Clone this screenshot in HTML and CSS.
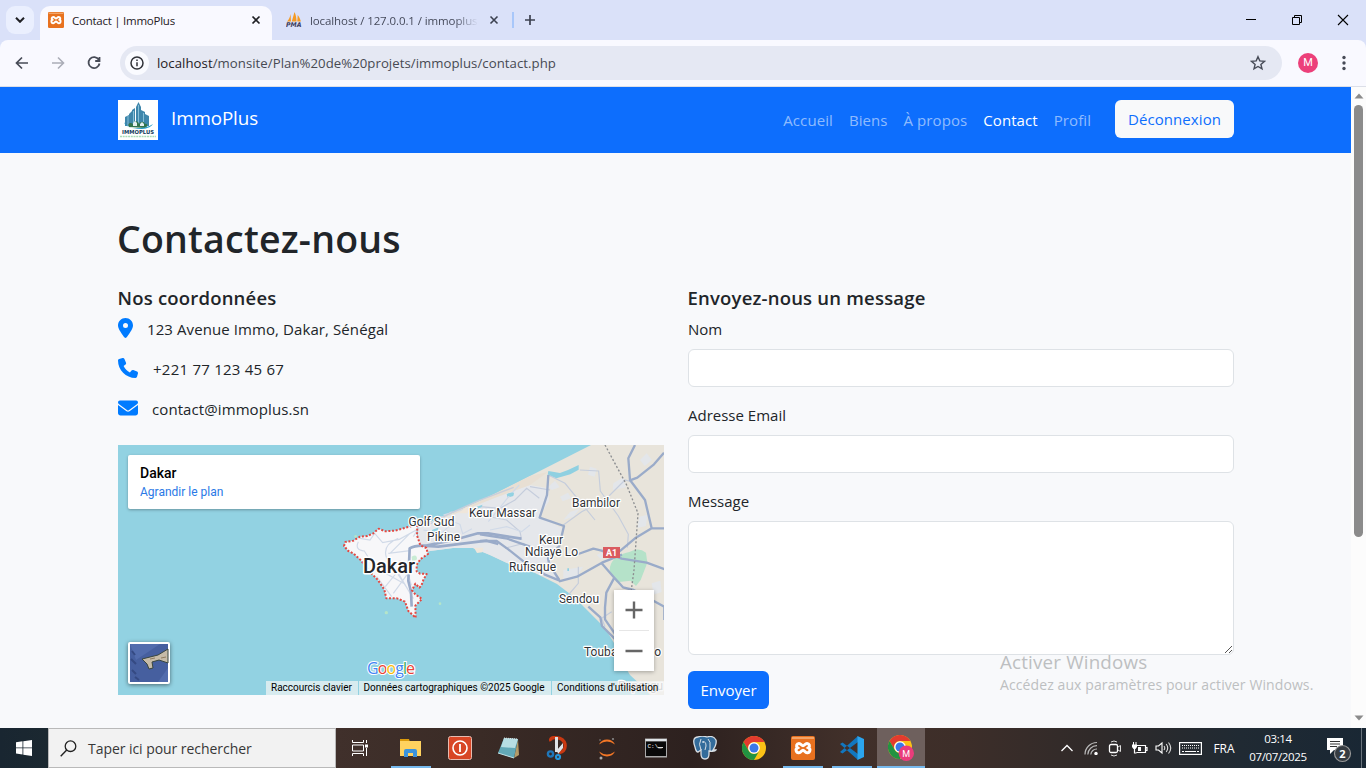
FILE: index.html
```html
<!DOCTYPE html>
<html lang="fr">
<head>
<meta charset="utf-8">
<title>Contact | ImmoPlus</title>
<link rel="stylesheet" href="styles.css">
</head>
<body>
<svg width="0" height="0" class="defs" aria-hidden="true">
  <symbol id="xampp" viewBox="0 0 24 24">
    <rect width="24" height="24" rx="2" fill="#e8711f"/><rect x="1" y="1" width="22" height="2" fill="#f2a468"/>
    <path d="M8 7.500a2.400 2.400 0 0 0-1.500 4.300A2.600 2.600 0 0 0 8 16.700c2 0 2.600-2.500 4-2.500s2 2.500 4 2.500a2.600 2.600 0 0 0 1.500-4.900A2.400 2.400 0 0 0 16 7.500c-2 0-2.600 2.300-4 2.300s-2-2.300-4-2.300z" fill="none" stroke="#fff" stroke-width="3"/>
  </symbol>
  <symbol id="chrome" viewBox="0 0 24 24">
    <circle cx="12" cy="12" r="12" fill="#fbc116"/>
    <path d="M1.600 6A12 12 0 0 1 22.400 6H12a6 6 0 0 0-5.200 9z" fill="#e33b2e"/>
    <path d="M1.600 6A12 12 0 0 0 12 24l5.200-9A6 6 0 0 1 6.800 15z" fill="#229342"/>
    <circle cx="12" cy="12" r="5.800" fill="#fff"/><circle cx="12" cy="12" r="4.500" fill="#3b78e7"/>
  </symbol>
</svg>

<header class="browser">
  <div class="tabstrip">
    <div class="tab-search"><svg width="10" height="6" viewBox="0 0 10 6"><path d="M1 .8l4 4 4-4" fill="none" stroke="#1f2024" stroke-width="2"/></svg></div>
    <div class="tab tab-active">
      <svg width="16" height="16"><use href="#xampp"/></svg>
      <span class="tab-title t-one">Contact | ImmoPlus</span>
      <svg class="close" width="10" height="10" viewBox="0 0 10 10"><path d="M1.500 1.500l7 7m0-7l-7 7" stroke="#1f2024" stroke-width="1.700"/></svg>
    </div>
    <div class="tab tab-other">
      <svg width="16" height="16" viewBox="0 0 16 16"><path d="M1 9.500c2-2 3-4.500 3.600-7.500l.4 7.500zM5.800 9.500L8.500 0c1.500 3 2 6.500 2 9.500zM11.300 9.500l.4-6.500c1.600 2 2.700 4.500 3.200 6.500z" fill="#f59a23"/><text x="0" y="15" class="pma" textLength="15.500" lengthAdjust="spacingAndGlyphs">PMA</text></svg>
      <span class="tab-title t-two">localhost / 127.0.0.1 / immoplus</span>
      <svg class="close" width="10" height="10" viewBox="0 0 10 10"><path d="M1.500 1.500l7 7m0-7l-7 7" stroke="#3c4150" stroke-width="1.600"/></svg>
    </div>
    <i class="tab-sep"></i>
    <svg class="newtab" width="12" height="12" viewBox="0 0 12 12"><path d="M6 1v10M1 6h10" stroke="#3c4150" stroke-width="1.700"/></svg>
    <div class="winctl">
      <svg width="46" height="40" viewBox="0 0 46 40"><path d="M18 19.500h10" stroke="#000"/></svg>
      <svg width="46" height="40" viewBox="0 0 46 40"><path d="M18.500 17.500h7v7h-7zM20.500 17.500v-2h7v7h-2" fill="none" stroke="#000"/></svg>
      <svg width="46" height="40" viewBox="0 0 46 40"><path d="M18 15l10 10m0-10L18 25" stroke="#000" stroke-width="1.100"/></svg>
    </div>
  </div>
  <div class="toolbar">
    <svg class="nav-ico" width="16" height="16" viewBox="0 0 16 16"><path d="M14 8H3M8 2.500L2.500 8 8 13.500" fill="none" stroke="#474b57" stroke-width="1.700"/></svg>
    <svg class="nav-ico" width="16" height="16" viewBox="0 0 16 16"><path d="M2 8h11M8 2.500L13.500 8 8 13.500" fill="none" stroke="#abadb8" stroke-width="1.600"/></svg>
    <svg class="nav-ico" width="16" height="16" viewBox="0 0 16 16"><path d="M12.800 4.800A5.500 5.500 0 1 0 13.500 8.500M13.500 2v4h-4.300" fill="none" stroke="#474b57" stroke-width="1.800"/></svg>
    <div class="omnibox">
      <span class="info"><svg width="14" height="14" viewBox="0 0 14 14"><circle cx="7" cy="7" r="6" fill="none" stroke="#303238" stroke-width="1.500"/><path d="M7 6.200v4M7 3.500v1.500" stroke="#303238" stroke-width="1.500"/></svg></span>
      <span class="url"><b>localhost</b>/monsite/Plan%20de%20projets/immoplus/contact.php</span>
      <svg class="star" width="16" height="16" viewBox="0 0 16 16"><path d="M8 1.700l1.800 4.200 4.700.4-3.600 3.100 1.100 4.500L8 11.500l-4 2.400 1.100-4.500L1.500 6.300l4.700-.4z" fill="none" stroke="#474b57" stroke-width="1.400"/></svg>
    </div>
    <span class="avatar">M</span>
    <svg class="menu" width="4" height="16" viewBox="0 0 4 16"><g fill="#474b57"><circle cx="2" cy="2.500" r="1.700"/><circle cx="2" cy="8" r="1.700"/><circle cx="2" cy="13.500" r="1.700"/></g></svg>
  </div>
</header>

<div class="viewport">
  <div class="page">
    <nav class="navbar">
      <svg class="logo" width="40" height="40" viewBox="0 0 40 40">
        <rect width="40" height="40" fill="#fff"/>
        <path d="M7 26V17l4-2v-1l3-3v15zM14 26V10l3-2v18zM18 26V7l2.500-5L23 7v19zM23 26V10l4 2v14zM27 26V14l4 2v10z" fill="#3f86ab"/>
        <path d="M10 26V16m5.500 10V11m5 15V5m5 21V13" stroke="#8cc5dc" stroke-width=".9"/>
        <path d="M11 27c-2-4 2-5 4-3 2-4 5-3 6 0 2-3 5-3 6 0 3-1 3 3 0 4z" fill="#33744d"/>
        <path d="M15 26v-3l2-2 2 2v3zM22 26v-2l2-2 2 2v2z" fill="#e4eef0"/>
        <path d="M6 22c1 7 19 9 29 2-5 8-26 6-29-2z" fill="#259bc8"/>
        <text x="4" y="34" class="logo-name" textLength="32" lengthAdjust="spacingAndGlyphs">IMMOPLUS</text>
        <path d="M2 36.500h36" stroke="#a9dcb8" stroke-width="1.300" stroke-dasharray="2 .7"/>
      </svg>
      <span class="brand">ImmoPlus</span>
      <div class="links">
        <a>Accueil</a><a>Biens</a><a>À propos</a><a class="current">Contact</a><a>Profil</a>
      </div>
      <a class="logout">Déconnexion</a>
    </nav>
    <main class="content">
      <h1>Contactez-nous</h1>
      <div class="columns">
        <section>
          <h2>Nos coordonnées</h2>
          <ul class="contact">
            <li class="c1"><svg width="15" height="20" viewBox="0 0 384 512"><path d="M215.700 499.200C267 435 384 279.400 384 192C384 86 298 0 192 0S0 86 0 192c0 87.400 117 243 168.300 307.200c12.300 15.300 35.100 15.300 47.400 0zM192 128a64 64 0 1 1 0 128 64 64 0 1 1 0-128z"/></svg><span>123 Avenue Immo, Dakar, Sénégal</span></li>
            <li class="c2"><svg width="20" height="20" viewBox="0 0 512 512"><path d="M164.900 24.600c-7.700-18.600-28-28.500-47.400-23.200l-88 24C12.100 30.200 0 46 0 64C0 311.400 200.600 512 448 512c18 0 33.800-12.100 38.600-29.500l24-88c5.300-19.400-4.600-39.700-23.200-47.400l-96-40c-16.300-6.800-35.200-2.100-46.300 11.600L304.700 368C234.300 334.700 177.300 277.700 144 207.300L193.300 167c13.700-11.200 18.400-30 11.600-46.300l-40-96z"/></svg><span>+221 77 123 45 67</span></li>
            <li class="c3"><svg width="20" height="20" viewBox="0 0 512 512"><path d="M48 64C21.500 64 0 85.500 0 112c0 15.100 7.100 29.300 19.200 38.400L236.800 313.600c11.400 8.500 27 8.500 38.400 0L492.800 150.400c12.100-9.100 19.200-23.300 19.200-38.400c0-26.500-21.500-48-48-48H48zM0 176V384c0 35.300 28.700 64 64 64H448c35.300 0 64-28.700 64-64V176L294.400 339.200c-22.800 17.100-54 17.100-76.800 0L0 176z"/></svg><span>contact@immoplus.sn</span></li>
          </ul>
          <div class="map">
            <svg width="546" height="250" viewBox="0 0 546 250">
              <rect width="546" height="250" fill="#92d2e2"/>
              <path d="M473 0L412 31 379 48 337 67 300 82 300 110 312 106 335 103 355 103 372 110 389 118 415 127 439 139 456 152 472 168 487 183 496 198 503 215 512 230 526 243 532 250H546V0z" fill="#e8e4db"/>
              <path d="M300 82L337 69 379 52 412 40 430 43 431 56 421 72 444 83 441 97 431 110 441 137 415 127 389 118 372 110 355 103 335 103 312 106 300 110z" fill="#e5e7eb"/>
              <path d="M320 75L362 56 412 31 430 27 412 40 379 52z" fill="#e8dfd3"/>
              <g transform="translate(362 -5) scale(.33333)">
                <g fill="#e3e6ea"><path d="M205 140l20-18 14 20-24 8zM400 130l30-18 8 30-40 8zM250 390l60-10-20 30-40 6zM480 60l20-20 16 20-22 18zM330 80l20 6-6 24-20-6zM250 240l20-24 30-10-20 24zM478 230l24-6-4 34-26 6zM515 430l26-8 4 34-24 8zM350 345l38-20 10 16-34 18zM240 170l24-12 10 16-26 10z"/></g>
                <path d="M205 93l35 6 24-9 32-15v14l-25 14-42 12-26-10zM82 166q10-10 20-6l-2 8-18 5z" fill="#8fd0e1"/>
                <path d="M448 336q28-16 50 2l4 30-20 52-14 18-16-16-42 5q-26-30-20-46 8-35 58-45z" fill="#b5e2c9"/>
                <path d="M0 200l60 5 45-25 35-35 38 30M0 225l80 15 40 35 5 25M75 325l55-15 30 25M250 255l55-40 70-35 60-60 16 4M300 90l56 3 5 60 54 75 30 55-3 40M205 105l50 25 90 110M295 380v50l-30 35M375 560l-10-25 30-20M210 150l-60-10" fill="none" stroke="#c5cddc" stroke-width="3.500"/>
                <path d="M465 15l-20 40 5 65 45 60 20 85-50 30-50 42-22 8M552 38l-30 35-50 40-22 8M205 105l-4 60-22 68 73 25-14 60-34 36 4 20 30 46M515 265h40M237 424l54-14 75-42 60-24M295 342l45-16 25 6 60 24 75 12 55 20M365 370l38 43 26 29 32 8 92 50v40M403 413l-24 45-4 45 0 35 33 48 10 18" fill="none" stroke="#9aabc9" stroke-width="7" stroke-linejoin="round"/>
                <path d="M0 283l82 13 68 24M0 303h50l35 25 50 40 58 35 46 19M325 500l36 32 5 26 40 40" fill="none" stroke="#9aabc9" stroke-width="7" stroke-linejoin="round"/>
                <path d="M375 15l65 120 34 85-12 170-8 60" fill="none" stroke="#8c8e91" stroke-width="4" stroke-dasharray="6 6"/>
                <path d="M262 385h5v8h-5z" fill="#8fd0e1"/>
              </g>
              <g transform="translate(212 -5) scale(.33333)">
                <path d="M42 318l4-12 24-4 20-12 22-2 18-8 16-14 20 8 28-2 20-5 20-6 24-7 4 4-1 28 10 30 18 8 5 18-22 15-12 17 0 20 10 7 20 1-10 18-6 17-6 6-12-12-10 20 10 12 20 14-20 20 1 36-22-20-10-28-24-10-32 0-6-26-20-30-24-24-26-34-22-20-16-8z" fill="#f7f7f9"/>
                <g fill="none" stroke="#d1dae8" stroke-width="3.500"><path d="M85 305q-12 25 18 28l30 48 90 50M90 295l30 5 14-20 24 28 50-10 55-30M205 295q-50 20-35 60 10 25 70 12M175 340l65-8M175 360l60 90M160 398l70-12 14 50M180 340l30-30 30-30M166 440l60-74M190 460l44-60M205 400l45 76M210 362l10 36M138 395l52-12M140 410l45 60M250 290l30-50 60-10 25-15M280 270l55 10 35-35 20 8 8 28 28-15M340 225l50-15 30 0M475 245l25-30 40-50 28-30M480 270l50-10 45 15 25-20M310 285l45-12"/></g>
                <path d="M300 252l60-32 86-38 105-40M260 258l35-30" fill="none" stroke="#c8cedb" stroke-width="4"/>
                <path d="M530 163q14-8 22-5-4 12-20 10zM440 200l18-6-4 8-12 4zM306 270l20-8-4 12-16 2z" fill="#92d2e2"/>
                <path d="M245 350q16-10 16 8l-14 10z" fill="#c9ecd4"/>
                <path d="M432 323l28 0-3 14-16 2zM410 200l30 0-30 20-25 0z" fill="#efe6db"/>
                <path d="M245 500l-2-45-8-32 4-98q15-10 50-8l85-18 70-19 30 0 100 16M290 318l35 2 145-18 35 10" fill="none" stroke="#9aabc9" stroke-width="8" stroke-linejoin="round"/>
                <path d="M42 318l4-12 24-4 20-12 22-2 18-8 16-14 20 8 28-2 20-5 20-6 24-7 4 4-1 28 10 30 18 8 5 18-22 15-12 17 0 20 10 7 20 1-10 18-6 17-6 6-12-12-10 20 10 12 20 14-20 20 1 36-22-20-10-28-24-10-32 0-6-26-20-30-24-24-26-34-22-20-16-8z" fill="none" stroke="#e34842" stroke-width="6" stroke-dasharray="6 5" stroke-linejoin="round"/>
                <g fill="#b5e5c8"><circle cx="169" cy="518" r="5"/><circle cx="330" cy="491" r="4"/><circle cx="77" cy="289" r="4"/></g>
              </g>
              <rect x="485" y="102" width="17" height="11" fill="#da5b60"/><text x="493.500" y="111" class="shield">A1</text>
              <g class="places">
                <text x="290.500" y="81" textLength="46">Golf Sud</text>
                <text x="309" y="96" textLength="33">Pikine</text>
                <text x="351" y="72" textLength="67">Keur Massar</text>
                <text x="454" y="62" textLength="48">Bambilor</text>
                <text x="421" y="99" textLength="24">Keur</text>
                <text x="407" y="111" textLength="53">Ndiaye Lo</text>
                <text x="391" y="126" textLength="47">Rufisque</text>
                <text x="441" y="158" textLength="40">Sendou</text>
                <text x="466" y="211" textLength="77">Touba Dialaoo</text>
                <text x="500" y="245" class="faded" textLength="45">Popengu</text>
                <text x="245" y="128" class="city" textLength="52">Dakar</text>
              </g>
              <text x="249" y="229" class="google" textLength="48"><tspan fill="#4285f4">G</tspan><tspan fill="#ea4335">o</tspan><tspan fill="#fbbc05">o</tspan><tspan fill="#4285f4">g</tspan><tspan fill="#34a853">l</tspan><tspan fill="#ea4335">e</tspan></text>
            </svg>
            <div class="place-card"><strong>Dakar</strong><a>Agrandir le plan</a></div>
            <svg class="satellite" width="42" height="42" viewBox="0 0 42 42"><rect width="42" height="42" rx="2" fill="#fff"/><rect x="2" y="2" width="38" height="38" fill="#465f9f"/><path d="M2 2h30L8 18zM30 40l10-14v14z" fill="#526cad"/><path d="M4 9l3 4m-4 4l5 5m-4 6l4 4m-1 3l4 3" stroke="#354a83" stroke-width="2"/><path d="M14 17l8-2 8-2 10-6v14l-9-3-7 2 1 6-4 1-2-5z" fill="#c6bba8" stroke="#39463f"/><path d="M22 17l5-1m6 0l5-1" stroke="#8f7c60"/></svg>
            <div class="zoomer"><svg width="40" height="81" viewBox="0 0 40 81"><path d="M11.500 20h17M20 11.500v17M11.500 61h17" stroke="#666" stroke-width="2.400"/><path d="M5 40.500h30" stroke="#e6e6e6"/></svg></div>
            <div class="legal"><span class="g1">Raccourcis clavier</span><span class="g2">Données cartographiques ©2025 Google</span><span class="g3">Conditions d'utilisation</span></div>
          </div>
        </section>
        <form>
          <h2>Envoyez-nous un message</h2>
          <label>Nom</label><div class="field"></div>
          <label>Adresse Email</label><div class="field"></div>
          <label>Message</label>
          <div class="field area"><svg width="9" height="9" viewBox="0 0 9 9"><path d="M1 8l7-7M5 8l3-3" stroke="#555" stroke-width="1"/></svg></div>
          <span class="send">Envoyer</span>
        </form>
      </div>
    </main>
  </div>
  <div class="scrollbar"><svg width="10" height="6" viewBox="0 0 10 6"><path d="M.5 5.500L5 .5l4.500 5z" fill="#8b8b8b"/></svg><i></i><svg class="down" width="10" height="6" viewBox="0 0 10 6"><path d="M.5 .5L5 5.500 9.500 .5z" fill="#8b8b8b"/></svg></div>
  <div class="watermark"><p class="w1">Activer Windows</p><p class="w2">Accédez aux paramètres pour activer Windows.</p></div>
</div>

<footer class="taskbar">
  <div class="start"><svg width="16" height="16" viewBox="0 0 16 16"><path d="M0 2.200l6.500-.9v6.200H0zM7.300 1.200L16 0v7.500H7.300zM0 8.300h6.500v6.200L0 13.600zM7.300 8.300H16V16l-8.700-1.300z" fill="#fff"/></svg></div>
  <div class="search"><svg width="17" height="17" viewBox="0 0 17 17"><circle cx="10.500" cy="6.200" r="5.300" fill="none" stroke="#222" stroke-width="1.300"/><path d="M6.700 10L.7 16.200" stroke="#222" stroke-width="1.400"/></svg><span>Taper ici pour rechercher</span></div>
  <div class="apps">
    <span class="app taskview"><svg width="16" height="16" viewBox="0 0 16 16"><path d="M.5 0v2.500h11V0M.5 5h11v6H.5zM.5 16v-2.500h11V16M14.500 0v3M14.500 8v8" fill="none" stroke="#fff"/><rect x="13" y="4.500" width="3" height="3" fill="#fff"/></svg></span>
    <span class="app open"><svg width="24" height="24" viewBox="0 0 24 24"><path d="M1 3h9l1 3h-10z" fill="#dc9b0c"/><path d="M1 5h21v15H1z" fill="#ffd25f"/><path d="M5 21v-6q0-2 2-2h9q2 0 2 2v6h-4v-4H9v4z" fill="#3b93dc"/></svg></span>
    <span class="app"><svg width="24" height="24" viewBox="0 0 24 24"><rect x=".5" y=".5" width="23" height="23" rx="2" fill="#d84625" stroke="#e6bbb0"/><circle cx="12" cy="12" r="7" fill="none" stroke="#fff" stroke-width="1.600"/><path d="M12 8v8" stroke="#fff" stroke-width="1.800"/></svg></span>
    <span class="app"><svg width="24" height="24" viewBox="0 0 24 24"><path d="M21 3l1 16-5 3z" fill="#b49a67"/><path d="M7 2l14 1-4 19-16-5z" fill="#62a9b7"/><path d="M7 2l14 1-3 9-14-1z" fill="#b7dee3"/><path d="M7 2l13 1" stroke="#dde3e3" stroke-dasharray="1 1"/><path d="M1 17l16 5" stroke="#c4e4e8"/></svg></span>
    <span class="app"><svg width="24" height="24" viewBox="0 0 24 24"><path d="M5 5C2 0 17 0 19 8c1 6-3 9-6 8" fill="none" stroke="#c93811" stroke-width="3.300"/><path d="M9 1h3v15H9zM11 14l6-7v5l-5 6z" fill="#dfe3e6"/><circle cx="4.500" cy="18" r="2.600" fill="none" stroke="#1f77ba" stroke-width="2.400"/><circle cx="12" cy="21" r="2" fill="none" stroke="#2797dc" stroke-width="2.200"/></svg></span>
    <span class="app"><svg width="24" height="24" viewBox="0 0 24 24"><path d="M4 8.500a9 9 0 0 1 16 0Q12 2.500 4 8.500zM4 15.500a9 9 0 0 0 16 0Q12 21.500 4 15.500z" fill="#f37726"/><circle cx="18" cy="3" r="1.100" fill="#888"/><circle cx="6" cy="22" r="1.500" fill="#aaa"/><circle cx="5" cy="4" r=".8" fill="#888"/></svg></span>
    <span class="app"><svg width="24" height="24" viewBox="0 0 24 24"><rect x="1" y="2.500" width="22" height="19" fill="#aaa"/><path d="M1.500 3h21v2h-21z" fill="#e0e5e8"/><path d="M2 5.500h20V20H2z" fill="#090909"/><text x="3.500" y="12" class="cmd">C:\_</text><path d="M14 11.500h5" stroke="#ddd"/></svg></span>
    <span class="app"><svg width="24" height="24" viewBox="0 0 24 24"><path d="M5 1C0 1 0 6 2 11q1 5 3 5l3-2v4q0 5 4 5 4 0 4-5v-3q6 1 7-1h-3q4-6 3-10-3-5-9-3Q9-1 5 1z" fill="#336c9b" stroke="#d7dee4" stroke-width="1.300"/><path d="M8 14q-3-6 0-11M15 3q3 3 2 7v6M10 6q3-1 3 4l-1 4" fill="none" stroke="#d7dee4"/><circle cx="10" cy="6" r=".8" fill="#fff"/></svg></span>
    <span class="app"><svg width="24" height="24"><use href="#chrome"/></svg></span>
    <span class="app open"><svg width="24" height="24"><use href="#xampp"/></svg></span>
    <span class="app open"><svg width="24" height="24" viewBox="0 0 24 24"><path d="M0 8l2.500-1.500L18 18v6zM0 16l2.500 1.500L18 6V0z" fill="#1277bf"/><path d="M17.500 0L24 3v18l-6.500 3V0z" fill="#2ba5ee"/></svg></span>
    <span class="app open active"><svg width="26" height="26" viewBox="0 0 26 26"><use href="#chrome" width="24" height="24"/><circle cx="18.300" cy="18.300" r="7.700" fill="#ea3c7b"/><text x="18.300" y="21.600" class="badge-m">M</text></svg></span>
  </div>
  <div class="tray">
    <svg width="12" height="8" viewBox="0 0 12 8"><path d="M.5 7L6 1.500 11.500 7" fill="none" stroke="#fff" stroke-width="1.300"/></svg>
    <svg width="14" height="14" viewBox="0 0 14 14"><path d="M1 13.500A12 12 0 0 1 13 1.500M3.800 13.500A9 9 0 0 1 13 4.700M6.800 13.500A6 6 0 0 1 13 8" fill="none" stroke="#bbb" stroke-width="1.200"/><circle cx="12" cy="12.500" r="1.700" fill="#fff"/></svg>
    <svg width="14" height="17" viewBox="0 0 14 17"><rect x="1.500" y="4.500" width="8" height="8" rx="1.500" fill="none" stroke="#fff" stroke-width="1.300"/><path d="M10 7l2.500-1.500v6L10 10M3 2q3-2 6 0M3 15q3 2 6 0" fill="none" stroke="#ddd"/></svg>
    <svg width="17" height="14" viewBox="0 0 17 14"><path d="M5.500 4.500h9v7h-9M14.500 6.500h1.500v3h-1.500M3.500 7.500V12h2" fill="none" stroke="#fff" stroke-width="1.200"/><path d="M1 3.500h5V6l-1.500 2h-2L1 6zM2 1h1v3H2zM4.500 1h1v3h-1zM7 6h3v4H7z" fill="#fff"/></svg>
    <svg width="17" height="14" viewBox="0 0 17 14"><path d="M1 5h2.500L7 2v10L3.500 9H1z" fill="none" stroke="#fff" stroke-width="1.100"/><path d="M9 5q1.500 2 0 4M11.200 3q3 4 0 8M13.500 1.500q4.500 5.500 0 11" fill="none" stroke="#ddd" stroke-width="1.100"/></svg>
    <svg width="23" height="13" viewBox="0 0 23 13"><rect x=".6" y=".6" width="21.800" height="11.800" fill="none" stroke="#fff" stroke-width="1.200"/><path d="M3 3.500h17M3 6h17" stroke="#fff" stroke-dasharray="1 1"/><path d="M3 9.500h2m1 0h11m1 0h2" stroke="#fff"/></svg>
    <span class="lang">FRA</span>
    <span class="clock"><em>03:14</em><em>07/07/2025</em></span>
    <svg class="notif" width="26" height="26" viewBox="0 0 26 26"><path d="M1 1h16v12H8l-4 4v-4H1z" fill="#fff"/><path d="M4 4.500h10M4 7h10M4 9.500h7" stroke="#333"/><circle cx="16.500" cy="16.500" r="8" fill="#363c42" stroke="#999" stroke-width="1.200"/><text x="16.500" y="20.500" class="count">2</text></svg>
    <i class="peek"></i>
  </div>
</footer>
</body>
</html>
```
FILE: styles.css
```css
* { box-sizing: border-box; }
body { margin: 0; width: 1366px; height: 768px; overflow: hidden; display: flex; flex-direction: column; font-family: "Open Sans", "Noto Sans", sans-serif; font-size: 15px; color: #212529; }
svg { display: block; flex: none; }
.defs { position: absolute; }
h1, h2, p, ul { margin: 0; padding: 0; }
span, a, label, h1, h2, p { white-space: nowrap; }

/* Browser chrome */
.browser { height: 87px; flex: none; background: #dae1f9; border-bottom: 1px solid #dcdfe8; }
.tabstrip { height: 40px; display: flex; align-items: flex-start; }
.tab-search { width: 28px; height: 28px; margin: 6px 6px 0; border-radius: 9px; background: #eaeffe; display: grid; place-items: center; }
.tab { display: flex; align-items: center; font-size: 11.500px; }
.tab-active { width: 232px; height: 34px; margin-top: 6px; padding: 0 11px 6px 8px; border-radius: 10px 10px 0 0; background: #f9f9ff; }
.tab-other { width: 240px; height: 28px; margin-top: 6px; padding: 0 13px 0 14px; color: #454a5b; }
.tab-title { margin-left: 8px; overflow: hidden; }
.t-one { color: #1f2024; letter-spacing: -.25px; }
.t-two { width: 168px; letter-spacing: -.1px; -webkit-mask-image: linear-gradient(90deg, #000 145px, transparent 168px); }
.close { margin-left: auto; }
.tab-sep { width: 2px; height: 16px; margin: 12px 10px 0 0; background: #a8c7fa; }
.newtab { margin-top: 14px; }
.winctl { margin-left: auto; display: flex; }
.toolbar { height: 46px; background: #f9f9ff; border-radius: 8px 8px 0 0; display: flex; align-items: center; padding: 0 20px 0 14px; }
.nav-ico { margin-right: 20px; }
.toolbar .nav-ico:nth-child(3) { margin-right: 18px; }
.omnibox { width: 1162px; height: 34px; border-radius: 17px; background: #e5e8f3; display: flex; align-items: center; padding: 0 16px 0 5px; }
.info { width: 24px; height: 24px; border-radius: 50%; background: #fafbff; display: grid; place-items: center; }
.url { margin-left: 8px; font-size: 13.200px; letter-spacing: .045px; color: #474a52; }
.url b { font-weight: 400; color: #1f2024; }
.star { margin-left: auto; }
.avatar { width: 20px; height: 20px; margin-left: 16px; border-radius: 50%; background: #ec407a; color: #fff; font: 11px/20px Roboto, sans-serif; text-align: center; }
.menu { margin-left: auto; }
.pma { font: italic bold 6.500px "DejaVu Sans", sans-serif; fill: #3c3c60; }

/* Web page */
.viewport { height: 641px; flex: none; display: flex; position: relative; }
.page { width: 1351px; background: #f8f9fb; overflow: hidden; }
.navbar { height: 66px; background: #0d6efd; padding: 0 117px 0 118px; display: flex; align-items: center; }
.logo-name { font: bold 5.500px "DejaVu Sans", sans-serif; fill: #123a5b; }
.brand { margin: -4px 0 0 13px; color: #fff; font-size: 18.800px; letter-spacing: -.1px; }
.links { margin-left: auto; display: flex; gap: 16px; color: rgba(255, 255, 255, .55); letter-spacing: .08px; }
.links .current { color: #fff; }
.logout { width: 119px; height: 38px; margin: -2px 0 0 24px; border-radius: 6px; background: #f8f9fa; color: #0d6efd; line-height: 38px; text-align: center; letter-spacing: .08px; }
.content { padding: 62px 117px 0 118px; }
h1 { font-weight: 600; font-size: 37.500px; line-height: 48px; letter-spacing: .2px; margin-left: -1px; }
.columns { display: grid; grid-template-columns: 546px 546px; gap: 24px; margin-top: 23px; }
h2 { font-weight: 600; font-size: 18.500px; line-height: 24px; letter-spacing: .2px; margin-left: -.5px; }
.contact { list-style: none; letter-spacing: .09px; }
.contact li { height: 40px; display: flex; align-items: flex-start; padding-top: 7px; }
.contact svg { fill: #007bff; margin-top: 1px; }
.contact span { line-height: 24px; }
.c1 svg { margin-right: 14px; }
.c2 svg { margin-right: 15px; }
.c2 span { letter-spacing: .24px; }
.c3 svg { margin-right: 14px; }
.map { width: 546px; height: 250px; margin-top: 15px; position: relative; overflow: hidden; }
.places text { font: 12px Roboto, sans-serif; fill: #303236; stroke: #fff; stroke-width: 2.500px; stroke-linejoin: round; paint-order: stroke; }
.places .city { font: 500 20px Roboto, sans-serif; fill: #25262a; stroke-width: 3px; }
.places .faded { fill: #8e9296; }
.shield { font: bold 9px Roboto, sans-serif; fill: #fff; text-anchor: middle; }
.google { font: 500 16px "Open Sans", sans-serif; stroke: #fff; stroke-width: 2px; paint-order: stroke; }
.place-card { position: absolute; left: 10px; top: 10px; width: 292px; height: 54px; padding: 9px 12px; display: flex; flex-direction: column; background: #fff; border-radius: 2px; box-shadow: 0 1px 3px rgba(0, 0, 0, .3); font: 12px/20px Roboto, sans-serif; }
.place-card strong { font-size: 14px; line-height: 18px; font-weight: 500; color: #000; }
.place-card a { color: #2a79e6; }
.satellite { position: absolute; left: 10px; top: 197px; filter: drop-shadow(0 1px 2px rgba(0, 0, 0, .5)); }
.zoomer { position: absolute; left: 496px; top: 145px; background: #fff; box-shadow: 0 1px 4px rgba(0, 0, 0, .3); }
.legal { position: absolute; right: 0; bottom: 0; height: 14px; display: flex; font: 10px/14px Roboto, sans-serif; color: #000; }
.legal span { background: rgba(245, 245, 245, .7); padding-left: 5px; }
.g1 { width: 92px; }
.legal .g2 { width: 192px; margin-left: 1px; padding-left: 4.500px; }
.g3 { width: 112px; margin-left: 1px; }
form { display: flex; flex-direction: column; align-items: flex-start; }
label { line-height: 24px; margin: 7px 0 8px; }
form label ~ label { margin-top: 16px; }
.field { width: 546px; height: 38px; background: #fff; border: 1px solid #dee2e6; border-radius: 6px; }
.area { height: 134px; display: flex; justify-content: flex-end; align-items: flex-end; }
.send { width: 81px; height: 38px; margin-top: 16px; border-radius: 6px; background: #0d6efd; color: #fff; text-align: center; line-height: 38px; }
.scrollbar { width: 15px; background: #fcfcfc; display: flex; flex-direction: column; align-items: center; padding: 6px 0 7px; }
.scrollbar i { width: 9px; height: 432px; border-radius: 5px; margin-top: 6px; background: #8b8b8b; }
.scrollbar .down { margin-top: auto; }
.watermark { position: absolute; left: 1000px; top: 563px; color: #bdbfc1; }
.w1 { font-size: 18.800px; line-height: 25px; letter-spacing: .18px; }
.w2 { font-size: 14px; line-height: 20px; letter-spacing: .1px; }

/* Windows taskbar */
.taskbar { height: 40px; flex: none; display: flex; background: linear-gradient(90deg, #192631 0, #1b2830 48px, #40302b 336px, #3a2b26 480px, #2d211f 690px, #41302a 850px, #3d2e29 960px, #302a29 1090px, #202a33 1240px, #192734 1366px); color: #fff; }
.start { width: 48px; display: grid; place-items: center; }
.search { width: 288px; background: #f2f2f2; border: 1px solid #b9b9b9; display: flex; align-items: center; padding-left: 11px; color: #373737; font-size: 14px; letter-spacing: -.05px; }
.search span { margin-left: 11px; }
.apps { display: flex; gap: 1px; }
.app { width: 48px; display: grid; place-items: center; }
.taskview { margin-right: 2px; }
.open { background: linear-gradient(#76b9ed, #76b9ed) center bottom / 40px 2px no-repeat; }
.active { background-size: 48px 2px; background-color: #6e605d; }
.cmd { font: 6px "Liberation Mono", monospace; fill: #fff; }
.badge-m { font: 9px Roboto, sans-serif; fill: #fff; text-anchor: middle; }
.tray { margin-left: auto; width: 311px; display: grid; grid-template-columns: 24px 24px 24px 24px 24px 31px 36px 72px 47px 5px; place-items: center; font-size: 11.500px; }
.lang { font-size: 12px; }
.clock { display: flex; flex-direction: column; align-items: center; line-height: 18px; letter-spacing: -.35px; }
.clock em { font-style: normal; }
.notif { margin: 4px 0 0 2px; }
.count { font: bold 11px "Open Sans", sans-serif; fill: #fff; text-anchor: middle; }
.peek { width: 1px; height: 40px; background: #69737c; justify-self: start; }
```
